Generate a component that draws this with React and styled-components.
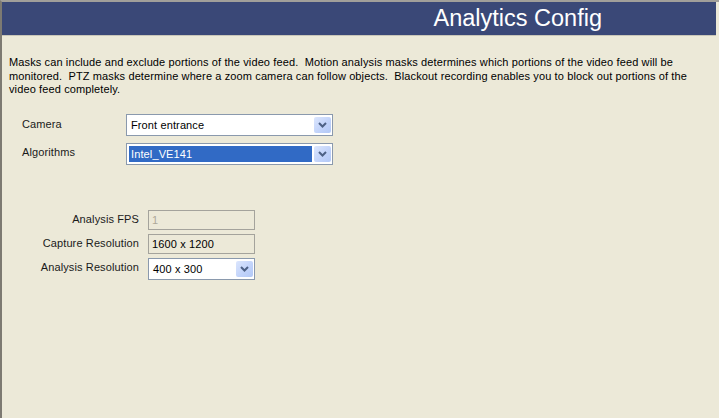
import React from "react";
import styled, { createGlobalStyle } from "styled-components";

const GlobalStyle = createGlobalStyle`
    html, body {
        margin: 0;
        padding: 0;
        background: #ece9d8;
    }
    * {
        box-sizing: border-box;
    }
`;

const Frame = styled.div`
    width: 719px;
    height: 418px;
    background: #ece9d8;
    border-top: 2px solid #a19f9a;
    border-left: 2px solid #7d7a72;
    font-family: "Liberation Sans", Arial, sans-serif;
    font-size: 11px;
    letter-spacing: 0.12px;
    color: #000;
    overflow: hidden;
`;

const Header = styled.div`
    height: 34px;
    margin-right: 3px;
    background: #3a4877;
    display: flex;
    align-items: center;
    justify-content: flex-end;
    padding-right: 114px;
    color: #fff;
    font-size: 23.5px;
    letter-spacing: 0;
    border-bottom: 1px solid #c9c6b8;
`;

const Intro = styled.p`
    margin: 0;
    padding: 20px 30px 0 7px;
    line-height: 13.5px;
`;

const Form = styled.div`
    display: grid;
    grid-template-columns: 104px 207px;
    row-gap: 7px;
    padding: 17px 0 0 20px;
    align-items: start;
`;

const Label = styled.div`
    padding-top: ${(p) => p.$top || 5}px;
    text-align: ${(p) => (p.$right ? "right" : "left")};
    padding-right: ${(p) => (p.$right ? 9 : 0)}px;
    color: #1a1a1a;
`;

const SelectBox = styled.div`
    height: 22px;
    width: ${(p) => p.$width}px;
    border: 1px solid #8a99ad;
    background: #fff;
    display: flex;
    align-items: stretch;
    padding: 2px 1px 2px 2px;
`;

const SelectValue = styled.div`
    flex: 1;
    display: flex;
    align-items: center;
    padding-left: 2px;
    background: ${(p) => (p.$selected ? "#316ac5" : "transparent")};
    color: ${(p) => (p.$selected ? "#fff" : "#000")};
    margin-right: 2px;
`;

const DropButton = styled.div`
    width: 17px;
    border-radius: 2px;
    background: linear-gradient(135deg, #dce6fd 0%, #c0d2fa 60%, #b2c8f6 100%);
    display: flex;
    align-items: center;
    justify-content: center;
`;

const TextBox = styled.div`
    height: 20px;
    width: 107px;
    border: 1px solid #a4a39c;
    background: #ece9d8;
    display: flex;
    align-items: center;
    padding-left: 3px;
    color: ${(p) => (p.$dim ? "#aca899" : "#000")};
`;

const Lower = styled.div`
    display: grid;
    grid-template-columns: 146px 107px;
    row-gap: 4px;
    padding-top: 45px;
    align-items: start;
`;

function Chevron() {
    return (
        <svg width="9" height="6" viewBox="0 0 9 6">
            <path d="M1 1 L4.5 4.5 L8 1" fill="none" stroke="#4d6185" strokeWidth="2" />
        </svg>
    );
}

function Select({ value, width, selected }) {
    return (
        <SelectBox $width={width}>
            <SelectValue $selected={selected}>{value}</SelectValue>
            <DropButton>
                <Chevron />
            </DropButton>
        </SelectBox>
    );
}

export default function App() {
    return (
        <Frame>
            <GlobalStyle />
            <Header>Analytics Config</Header>
            <Intro>
                Masks can include and exclude portions of the video feed.&nbsp; Motion analysis masks determines which
                portions of the video feed will be monitored.&nbsp; PTZ masks determine where a zoom camera can follow
                objects.&nbsp; Blackout recording enables you to block out portions of the video feed completely.
            </Intro>
            <Form>
                <Label $top={4}>Camera</Label>
                <Select value="Front entrance" width={207} />
                <Label $top={3}>Algorithms</Label>
                <Select value="Intel_VE141" width={207} selected />
            </Form>
            <Lower>
                <Label $right $top={3}>Analysis FPS</Label>
                <TextBox $dim>1</TextBox>
                <Label $right $top={3}>Capture Resolution</Label>
                <TextBox>1600 x 1200</TextBox>
                <Label $right $top={3}>Analysis Resolution</Label>
                <Select value="400 x 300" width={107} />
            </Lower>
        </Frame>
    );
}
